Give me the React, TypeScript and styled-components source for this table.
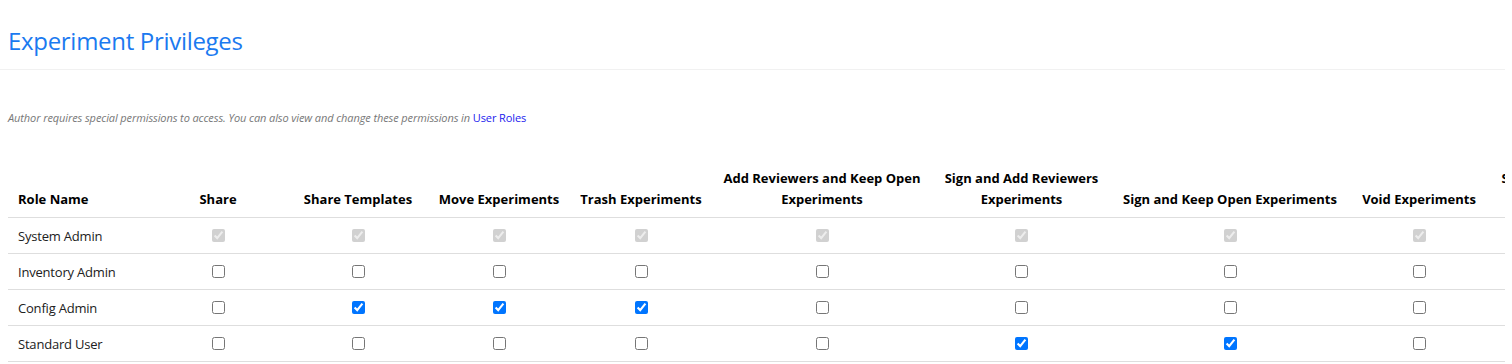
import React from "react";
import styled, { createGlobalStyle } from "styled-components";

const GlobalStyle = createGlobalStyle`
  html, body {
    margin: 0;
    padding: 0;
    background: #ffffff;
  }
  body {
    font-family: "Open Sans", "Noto Sans", Arial, sans-serif;
    color: #212529;
  }
  * { box-sizing: border-box; }
`;

const Page = styled.div`
  width: 1505px;
  overflow: hidden;
`;

const Header = styled.header`
  height: 70px;
  padding: 25px 8px 0;
  border-bottom: 1px solid #f1f1f1;
`;

const Title = styled.h1`
  margin: 0;
  font-size: 24px;
  line-height: 32px;
  font-weight: 400;
  letter-spacing: -0.3px;
  color: #1b7af0;
`;

const Note = styled.p`
  margin: 40px 8px 0;
  font-size: 11px;
  line-height: 16px;
  font-style: italic;
  letter-spacing: -0.1px;
  color: #777777;
`;

const RoleLink = styled.a`
  font-style: normal;
  color: #1a1aee;
  text-decoration: none;
`;

const TableWrap = styled.div`
  margin: 34px 0 0 8px;
`;

const Table = styled.table`
  border-collapse: collapse;
  table-layout: fixed;
  width: max-content;
`;

const HeadCell = styled.th<{ $left?: boolean }>`
  padding: 8px 10px 7px;
  font-size: 13px;
  line-height: 21px;
  font-weight: 700;
  color: #000;
  text-align: ${(p) => (p.$left ? "left" : "center")};
  vertical-align: bottom;
  border-bottom: 1px solid #dedede;
`;

const Cell = styled.td<{ $left?: boolean }>`
  height: 36px;
  padding: 0 10px;
  font-size: 13px;
  letter-spacing: -0.2px;
  color: #212121;
  text-align: ${(p) => (p.$left ? "left" : "center")};
  vertical-align: middle;
  border-bottom: 1px solid #dedede;
`;

const Check = styled.input`
  margin: 0 auto;
  width: 13px;
  height: 13px;
  display: block;
`;

const columns = [
  { label: "Share", width: 140 },
  { label: "Share Templates", width: 140 },
  { label: "Move Experiments", width: 142 },
  { label: "Trash Experiments", width: 142 },
  { label: "Add Reviewers and Keep Open Experiments", width: 220 },
  { label: "Sign and Add Reviewers Experiments", width: 179 },
  { label: "Sign and Keep Open Experiments", width: 238 },
  { label: "Void Experiments", width: 140 },
  { label: "Sign and Close Experiments", width: 118 },
];

type Role = { name: string; checked: number[]; locked?: boolean };

const roles: Role[] = [
  { name: "System Admin", checked: [0, 1, 2, 3, 4, 5, 6, 7, 8], locked: true },
  { name: "Inventory Admin", checked: [] },
  { name: "Config Admin", checked: [1, 2, 3] },
  { name: "Standard User", checked: [5, 6] },
];

export default function App() {
  return (
    <Page>
      <GlobalStyle />
      <Header>
        <Title>Experiment Privileges</Title>
      </Header>
      <Note>
        Author requires special permissions to access. You can also view and change these permissions in{" "}
        <RoleLink href="#">User Roles</RoleLink>
      </Note>
      <TableWrap>
        <Table>
          <colgroup>
            <col style={{ width: 140 }} />
            {columns.map((c) => (
              <col key={c.label} style={{ width: c.width }} />
            ))}
          </colgroup>
          <thead>
            <tr>
              <HeadCell $left>Role Name</HeadCell>
              {columns.map((c) => (
                <HeadCell key={c.label}>{c.label}</HeadCell>
              ))}
            </tr>
          </thead>
          <tbody>
            {roles.map((r) => (
              <tr key={r.name}>
                <Cell $left>{r.name}</Cell>
                {columns.map((c, i) => (
                  <Cell key={c.label}>
                    <Check
                      type="checkbox"
                      readOnly
                      checked={r.checked.includes(i)}
                      disabled={r.locked}
                    />
                  </Cell>
                ))}
              </tr>
            ))}
          </tbody>
        </Table>
      </TableWrap>
    </Page>
  );
}
